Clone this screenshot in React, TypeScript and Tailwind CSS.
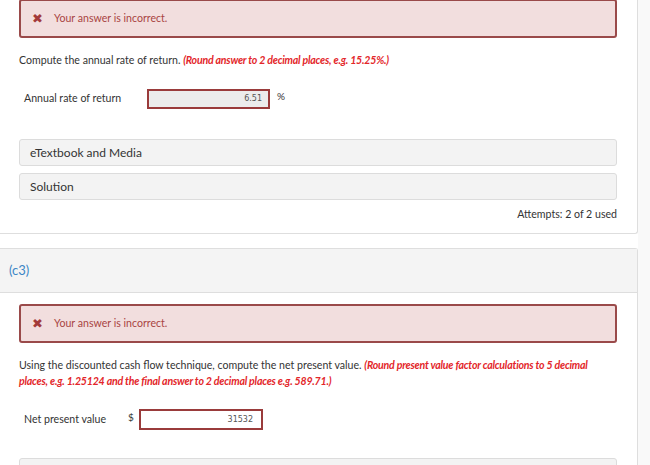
import React from "react";

const lato = { fontFamily: "Lato, 'Open Sans', sans-serif" };

function ErrorBox() {
  return (
    <div className="flex h-[39px] items-center rounded-[3px] border-2 border-[#9a4a4a] bg-[#f2dede] pl-[11px]">
      <span className="text-[13px] leading-none text-[#a33a3a]">✖</span>
      <span className="ml-[11px] text-[10.6px] text-[#a94442]">Your answer is incorrect.</span>
    </div>
  );
}

function Panel({ label }: { label: string }) {
  return (
    <div className="flex h-[27px] items-center rounded-[3px] border border-[#dcdcdc] bg-[#f3f3f3] pl-[10px] text-[12px] text-[#333]">
      {label}
    </div>
  );
}

export default function App() {
  return (
    <div className="flex h-[465px] w-[650px] overflow-hidden bg-white text-[#333]" style={lato}>
      <div className="flex w-[638px] flex-col">
        {/* Card 1 */}
        <div className="-mt-[1px] border-r border-b border-[#dedede] pb-[12px] pl-[19px] pr-[20px] rounded-br-[3px]">
          <ErrorBox />
          <p className="mt-[14px] text-[10.6px] leading-[16px] text-[#333]">
            Compute the annual rate of return.{" "}
            <span className="text-[10.6px] font-bold italic tracking-[-0.22px] text-[#e3262a]">
              (Round answer to 2 decimal places, e.g. 15.25%.)
            </span>
          </p>
          <div className="mt-[21px] flex items-center pl-[5px]">
            <span className="w-[123px] text-[10.6px]">Annual rate of return</span>
            <div
              className="flex h-[20px] w-[123px] items-center justify-end border-2 border-[#9a3b3b] bg-[#ececec] pr-[6px] text-[8px] text-[#555]"
              style={{ fontFamily: "'DejaVu Sans', sans-serif" }}
            >
              6.51
            </div>
            <span className="ml-[7px] -mt-[6px] text-[10px]">%</span>
          </div>
          <div className="mt-[30px] flex flex-col gap-[7px]">
            <Panel label="eTextbook and Media" />
            <Panel label="Solution" />
          </div>
          <div className="mt-[7px] text-right text-[10.6px] leading-[14px] text-[#333]">
            Attempts: 2 of 2 used
          </div>
        </div>

        {/* Card 2 */}
        <div className="mt-[14px] flex-1 border-r border-t border-[#dedede] rounded-tr-[3px]">
          <div className="flex h-[44px] items-center border-b border-[#dedede] bg-[#f4f4f4] pl-[9px] text-[13px] text-[#3c86c6]">
            (c3)
          </div>
          <div className="pl-[19px] pr-[20px] pt-[11px]">
            <ErrorBox />
            <p className="mt-[14px] text-[10.6px] leading-[16px] text-[#333]">
              Using the discounted cash flow technique, compute the net present value.{" "}
              <span className="text-[10.6px] font-bold italic tracking-[-0.22px] text-[#e3262a]">
                (Round present value factor calculations to 5 decimal
                <br />
                places, e.g. 1.25124 and the final answer to 2 decimal places e.g. 589.71.)
              </span>
            </p>
            <div className="mt-[20px] flex items-center pl-[5px]">
              <span className="w-[104px] text-[10.6px]">Net present value</span>
              <span className="w-[11px] -mt-[4px] text-[10px]">$</span>
              <div
                className="flex h-[21px] w-[124px] items-center justify-end border-2 border-[#9a3b3b] bg-white pr-[8px] text-[8px] text-[#555]"
                style={{ fontFamily: "'DejaVu Sans', sans-serif" }}
              >
                31532
              </div>
            </div>
            <div className="mt-[28px] h-[30px] rounded-[3px] border border-[#dcdcdc] bg-[#f3f3f3]" />
          </div>
        </div>
      </div>
      <div className="flex-1 bg-[#f9f9f9]" />
    </div>
  );
}
